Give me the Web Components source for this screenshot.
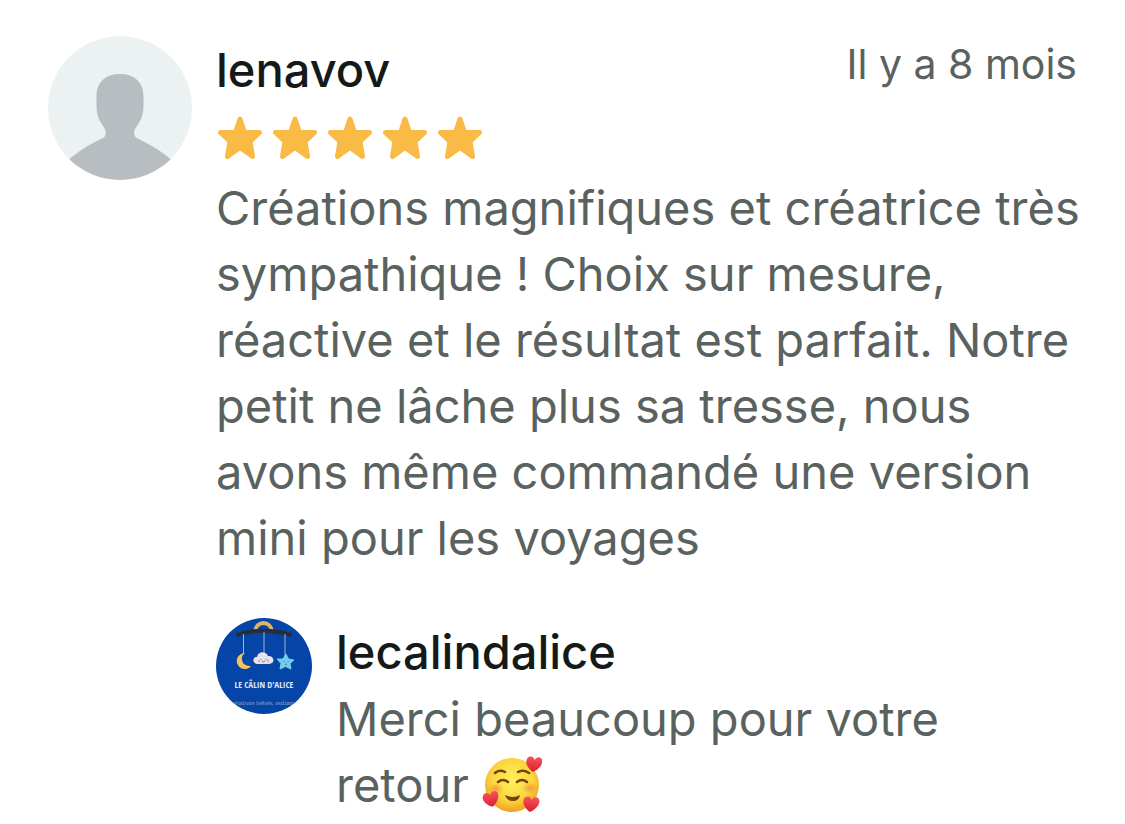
<!DOCTYPE html>
<html lang="fr">
<head>
<meta charset="utf-8">
<meta name="viewport" content="width=device-width, initial-scale=1">
<title>Avis client</title>
<style>
  body {
    margin: 0;
    background: #fff;
    color: #59625f;
    font: 400 47px/66px Inter, "Liberation Sans", sans-serif;
  }
</style>
</head>
<body>
<main>
  <review-card>
    <user-avatar slot="avatar"></user-avatar>
    <span slot="author">lenavov</span>
    <time slot="date">Il y a 8 mois</time>
    <star-rating slot="rating" value="5"></star-rating>
    <span slot="text">Créations magnifiques et créatrice très sympathique ! Choix sur mesure, réactive et le résultat est parfait. Notre petit ne lâche plus sa tresse, nous avons même commandé une version mini pour les voyages</span>
    <shop-reply slot="reply">
      <shop-logo slot="logo"></shop-logo>
      <span slot="author">lecalindalice</span>
      <span>Merci beaucoup pour votre retour <love-emoji></love-emoji></span>
    </shop-reply>
  </review-card>
</main>

<script>
  function define(name, html) {
    const template = document.createElement('template');
    template.innerHTML = html;
    customElements.define(name, class extends HTMLElement {
      constructor() {
        super();
        this.attachShadow({ mode: 'open' }).append(template.content.cloneNode(true));
      }
    });
  }

  define('review-card', `
    <style>
      :host { display: block; padding: 36px 40px 0 48px; }
      article { display: flex; align-items: flex-start; gap: 24px; }
      .content { flex: 1; min-width: 0; }
      header { display: flex; justify-content: space-between; align-items: flex-start; gap: 24px; padding-right: 8px; }
      h2 { margin: 0; font: inherit; font-weight: 500; line-height: 68px; color: #151a19; }
      .date { font-size: 41px; line-height: 56px; }
      .rating { padding: 12px 0 15px; }
      p { margin: 0; }
      .reply { padding-top: 47px; }
    </style>
    <article>
      <slot name="avatar"></slot>
      <div class="content">
        <header>
          <h2><slot name="author"></slot></h2>
          <div class="date"><slot name="date"></slot></div>
        </header>
        <div class="rating"><slot name="rating"></slot></div>
        <p><slot name="text"></slot></p>
        <div class="reply"><slot name="reply"></slot></div>
      </div>
    </article>`);

  define('shop-reply', `
    <style>
      :host { display: flex; align-items: flex-start; gap: 24px; }
      .content { flex: 1; min-width: 0; }
      h3 { margin: 0; font: inherit; font-weight: 500; line-height: 68px; color: #151a19; }
      p { margin: 0; }
    </style>
    <slot name="logo"></slot>
    <div class="content">
      <h3><slot name="author"></slot></h3>
      <p><slot></slot></p>
    </div>`);

  define('user-avatar', `
    <style>
      :host { display: block; flex: none; width: 144px; height: 144px; border-radius: 50%; overflow: hidden; background: #ecf2f2; }
      svg { display: block; width: 100%; height: 100%; }
    </style>
    <svg viewBox="0 0 144 144" aria-hidden="true">
      <path fill="#b7bdc0" d="M72 38C58 38 48.500 46 48.500 60V70C48.500 79 51 84 55 90C58 94 59 98 56 101.500C45 107 33 113 21.500 123V144H122.500V123C111 113 98 107 88 101.500C85 98 86 94 89 90C93 84 95.500 79 95.500 70V60C95.500 46 86 38 72 38Z"/>
    </svg>`);

  define('shop-logo', `
    <style>
      :host { display: block; flex: none; width: 96px; height: 96px; border-radius: 50%; overflow: hidden; background: #0645a8; }
      svg { display: block; width: 100%; height: 100%; }
      .name { font: 9px "Liberation Sans Narrow", "Open Sans Condensed", "Open Sans", sans-serif; fill: #dfe8f6; }
      .tag { font: 7px "Liberation Serif", serif; fill: #98a3bb; }
    </style>
    <svg viewBox="0 0 96 96" role="img" aria-label="Le Câlin d'Alice">
      <path d="M39 14C40 2 55 2 56 14" fill="none" stroke="#dfb46a" stroke-width="4"/>
      <path d="M22 16.500Q48 9 74 16.500" fill="none" stroke="#262d36" stroke-width="4" stroke-linecap="round"/>
      <path d="M27.500 16V36M48 14V36M69 16V38" stroke="#9fb3d6" fill="none"/>
      <path d="M29 35A8 8 0 1 0 35 48Q27 48 26 42Q25 38 29 35Z" fill="#f3c35d"/>
      <path d="M42 46C36 46 36 39 41 39C42 33 50 33 52 38C58 37 60 46 53 46Z" fill="#e9e2ec"/>
      <path d="M45 41v1M50 41v1M46 43q1.500 2 3 0" stroke="#59555e" fill="none" stroke-width=".8"/>
      <circle cx="43" cy="43" r="1.200" fill="#e9a8a8"/><circle cx="52" cy="43" r="1.200" fill="#e9a8a8"/>
      <path d="M70 36L72.500 41L78 42L74 45.500L75 51L69.500 48.500L64 51L65 45.500L61 41L67 41Z" fill="#76cdeb" stroke="#76cdeb" stroke-linejoin="round"/>
      <path d="M68 43v1M72 43v1M69 46q1 1 2 0" stroke="#356a84" fill="none" stroke-width=".8"/>
      <text class="name" x="48" y="70" text-anchor="middle">LE CÂLIN D'ALICE</text>
      <text class="tag" x="48" y="87" text-anchor="middle">réations bébés, enfants</text>
    </svg>`);

  define('love-emoji', `
    <style>
      :host { display: inline-block; width: 60px; height: 60px; vertical-align: -13px; }
      svg { display: block; width: 100%; height: 100%; }
    </style>
    <svg viewBox="0 0 60 60" role="img" aria-label="Visage souriant avec des cœurs">
      <defs>
        <radialGradient id="face" cx=".5" cy=".4" r=".6">
          <stop offset="0" stop-color="#fff05c"/><stop offset=".65" stop-color="#fbd43d"/><stop offset="1" stop-color="#efa021"/>
        </radialGradient>
        <radialGradient id="cheek"><stop offset="0" stop-color="#f68a35" stop-opacity=".75"/><stop offset="1" stop-color="#f68a35" stop-opacity="0"/></radialGradient>
        <linearGradient id="red" x2="0" y2="1"><stop offset="0" stop-color="#f9535b"/><stop offset="1" stop-color="#d91f2d"/></linearGradient>
        <path id="heart" d="M0 8C-4 6-8 2-8-2C-8-7-2-9 0-4C2-9 8-8 8-3C8 1 4 6 0 8Z"/>
      </defs>
      <circle cx="30" cy="30" r="27" fill="url(#face)"/>
      <ellipse cx="14" cy="34" rx="8" ry="6" fill="url(#cheek)"/>
      <ellipse cx="48" cy="33" rx="8" ry="6" fill="url(#cheek)"/>
      <g fill="none" stroke="#75420d" stroke-width="2.500" stroke-linecap="round">
        <path d="M13 18Q17 14 23 17M36 17Q42 14 47 18"/>
        <path d="M16 27Q21 23 26 27M35 27Q40 23 45 27"/>
      </g>
      <path d="M23 40Q31 44 38 40Q37 46 31 46Q25 46 23 40Z" fill="#75420d"/>
      <g fill="url(#red)">
        <use href="#heart" transform="translate(52 9) rotate(8)"/>
        <use href="#heart" transform="translate(9 44) rotate(-12)"/>
        <use href="#heart" transform="translate(49 49) rotate(8)"/>
      </g>
    </svg>`);

  customElements.define('star-rating', class extends HTMLElement {
    constructor() {
      super();
      const star = `<svg viewBox="0 0 44 44" aria-hidden="true"><path d="M22 3L26.500 16.500H41.500L32 25.500L34.500 40.500L22 31.500L9.500 40.500L12 25.500L2.500 16.500H17.500Z"/></svg>`;
      this.attachShadow({ mode: 'open' }).innerHTML = `
        <style>
          :host { display: flex; gap: 11px; padding-left: 2px; }
          svg { display: block; width: 44px; height: 44px; }
          path { fill: #f9bb45; stroke: #f9bb45; stroke-width: 5; stroke-linejoin: round; }
        </style>` + star.repeat(Number(this.getAttribute('value')) || 5);
      this.setAttribute('role', 'img');
      this.setAttribute('aria-label', '5 étoiles sur 5');
    }
  });
</script>
</body>
</html>
